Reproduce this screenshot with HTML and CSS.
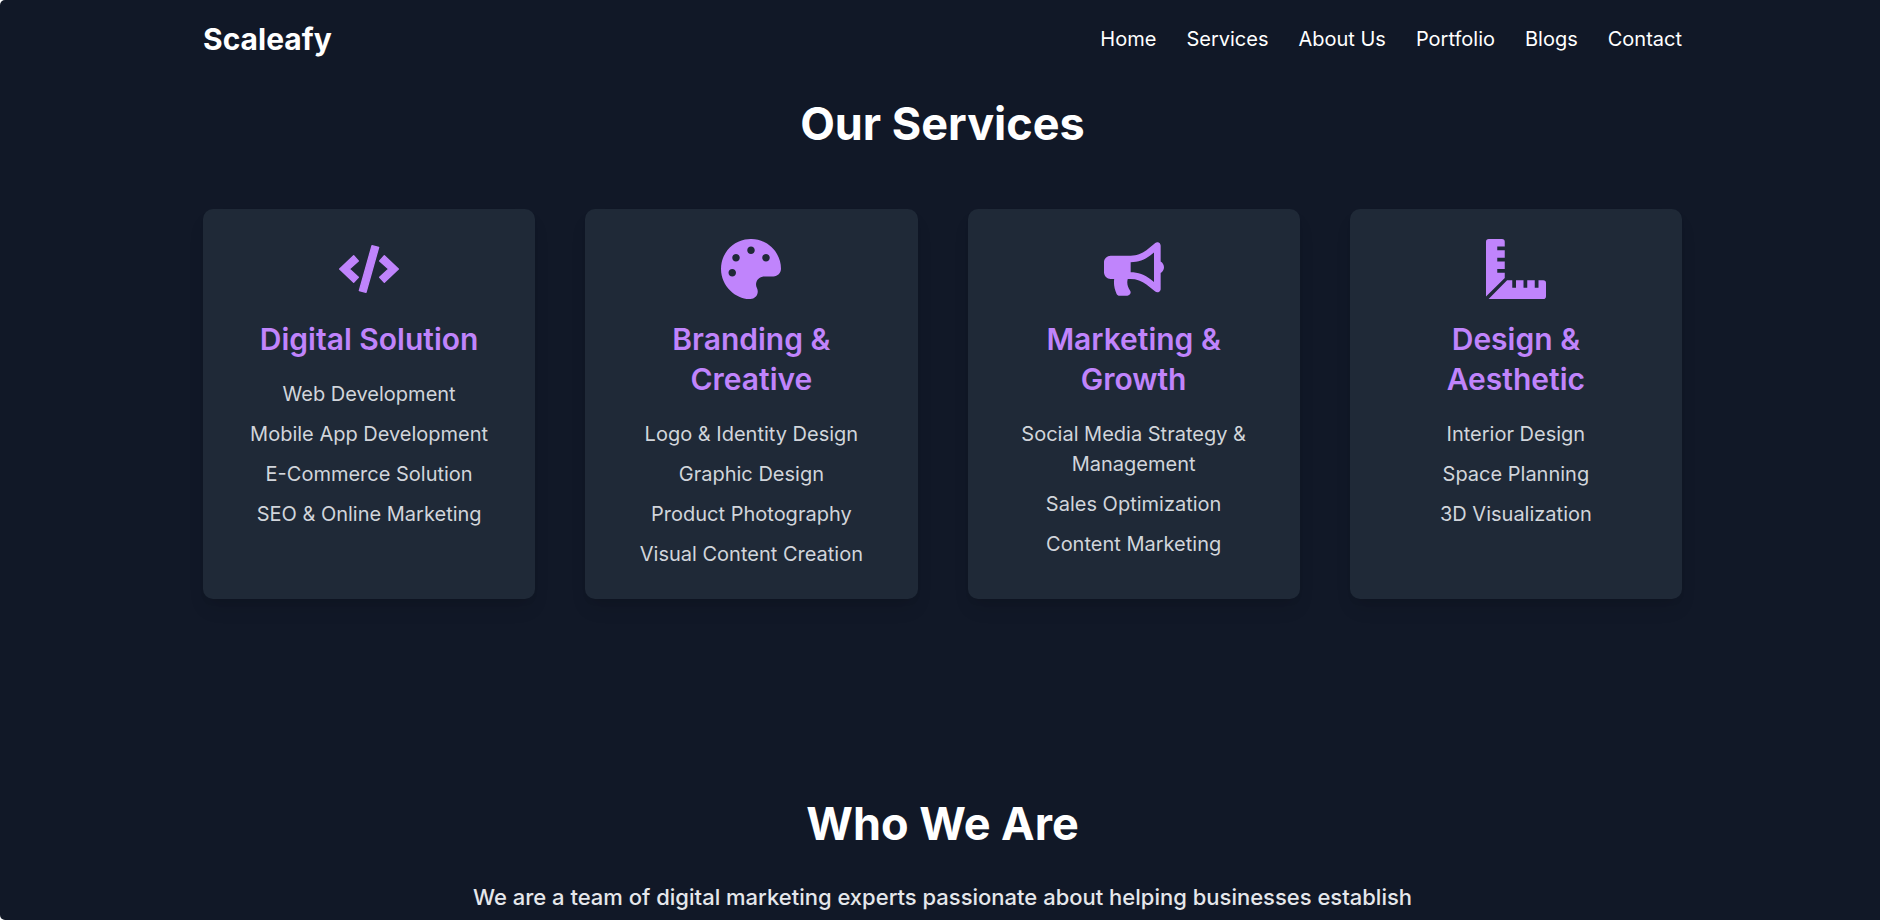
FILE: index.html
```html
<!DOCTYPE html>
<html lang="en">
<head>
  <meta charset="utf-8">
  <meta name="viewport" content="width=device-width, initial-scale=1">
  <title>Scaleafy</title>
  <link rel="stylesheet" href="styles.css">
</head>
<body>
  <div class="page">
    <header class="header">
      <div class="logo">Scaleafy</div>
      <nav class="nav">
        <a href="#home">Home</a>
        <a href="#services">Services</a>
        <a href="#about">About Us</a>
        <a href="#portfolio">Portfolio</a>
        <a href="#blogs">Blogs</a>
        <a href="#contact">Contact</a>
      </nav>
    </header>
    <main>
      <section class="services" id="services">
        <h2 class="section-title">Our Services</h2>
        <div class="cards">
          <article class="card">
            <svg class="icon" viewBox="0 0 180 180" aria-hidden="true"><path stroke="currentColor" stroke-width="4" stroke-linejoin="round" d="M2 90 44 50 58 66 31 90 58 115 44 130ZM178 90 136 50 122 66 149 90 122 115 136 130ZM99 20 119 25 81 160 61 155Z"/></svg>
            <h3 class="card-title">Digital Solution</h3>
            <ul class="list">
              <li>Web Development</li>
              <li>Mobile App Development</li>
              <li>E-Commerce Solution</li>
              <li>SEO &amp; Online Marketing</li>
            </ul>
          </article>
          <article class="card">
            <svg class="icon" viewBox="0 0 512 512" aria-hidden="true"><path d="M204.3 5C104.9 24.4 24.8 104.3 5.2 203.4c-37 187 131.7 326.4 258.8 306.7 41.2-6.4 61.4-54.6 42.5-91.7-23.1-45.4 9.9-98.4 60.9-98.4h79.7c35.8 0 64.8-29.6 64.9-65.3C511.5 97.1 368.1-26.9 204.3 5zM96 320c-17.7 0-32-14.3-32-32s14.3-32 32-32 32 14.3 32 32-14.3 32-32 32zm32-128c-17.7 0-32-14.3-32-32s14.3-32 32-32 32 14.3 32 32-14.3 32-32 32zm128-64c-17.7 0-32-14.3-32-32s14.3-32 32-32 32 14.3 32 32-14.3 32-32 32zm128 64c-17.7 0-32-14.3-32-32s14.3-32 32-32 32 14.3 32 32-14.3 32-32 32z"/></svg>
            <h3 class="card-title">Branding &amp; Creative</h3>
            <ul class="list">
              <li>Logo &amp; Identity Design</li>
              <li>Graphic Design</li>
              <li>Product Photography</li>
              <li>Visual Content Creation</li>
            </ul>
          </article>
          <article class="card">
            <svg class="icon" viewBox="0 0 576 512" aria-hidden="true"><path d="M576 240c0-23.63-12.95-44.04-32-55.12V32.01C544 23.26 537.02 0 512 0c-7.12 0-14.19 2.38-19.98 7.02l-85.03 68.03C364.28 109.19 310.66 128 256 128H64c-35.35 0-64 28.65-64 64v96c0 35.35 28.65 64 64 64h33.7c-1.39 10.48-2.18 21.14-2.18 32 0 39.77 9.26 77.35 25.56 110.94 5.19 10.69 16.52 17.06 28.4 17.06h74.28c26.05 0 41.69-29.84 25.9-50.56-16.4-21.52-26.15-48.36-26.15-77.44 0-11.11 1.62-21.79 4.41-32H256c54.66 0 108.28 18.81 150.98 52.95l85.03 68.03a32.023 32.023 0 0 0 19.98 7.02c24.92 0 32-22.78 32-32V295.13C563.05 284.04 576 263.63 576 240zm-96 141.42l-33.05-26.44C392.95 311.78 325.12 288 256 288v-96c69.12 0 136.95-23.78 190.95-66.98L480 98.58v282.84z"/></svg>
            <h3 class="card-title">Marketing &amp; Growth</h3>
            <ul class="list">
              <li>Social Media Strategy &amp; Management</li>
              <li>Sales Optimization</li>
              <li>Content Marketing</li>
            </ul>
          </article>
          <article class="card">
            <svg class="icon" viewBox="0 0 512 512" aria-hidden="true"><path d="M24 0H136a24 24 0 0 1 24 24V64H96V96H160V160H96V192H160V256H96V288H160V332L0 490V24A24 24 0 0 1 24 0ZM180 352H224V416H256V352H320V416H352V352H416V416H448V352H488a24 24 0 0 1 24 24V488a24 24 0 0 1-24 24H22Z"/></svg>
            <h3 class="card-title">Design &amp; Aesthetic</h3>
            <ul class="list">
              <li>Interior Design</li>
              <li>Space Planning</li>
              <li>3D Visualization</li>
            </ul>
          </article>
        </div>
      </section>
      <section class="about" id="about">
        <h2 class="section-title">Who We Are</h2>
        <p class="intro">We are a team of digital marketing experts passionate about helping businesses establish</p>
      </section>
    </main>
  </div>
</body>
</html>
```
FILE: styles.css
```css
* {
  box-sizing: border-box;
  margin: 0;
  padding: 0;
}

html {
  background: #fff;
}

body {
  font-family: Inter, "Liberation Sans", sans-serif;
  font-size: 20px;
  line-height: 30px;
  color: #fff;
}

.page {
  height: 100vh;
  overflow: hidden;
  padding: 0 198px 0 203px;
  background: #111827;
  border-radius: 5px 0 0 5px;
}

.header {
  display: flex;
  align-items: center;
  justify-content: space-between;
  padding: 19px 0 20px;
}

.logo {
  font-size: 30px;
  font-weight: 700;
  line-height: 40px;
}

.nav {
  display: flex;
  gap: 30px;
}

.nav a {
  color: inherit;
  text-decoration: none;
}

.services {
  padding: 20px 0 100px;
}

.section-title {
  font-size: 45px;
  font-weight: 700;
  line-height: 50px;
  text-align: center;
}

.cards {
  display: grid;
  grid-template-columns: repeat(4, 1fr);
  gap: 50px;
  margin-top: 60px;
}

.card {
  display: flex;
  flex-direction: column;
  align-items: center;
  gap: 20px;
  padding: 30px;
  text-align: center;
  background: #1f2937;
  border-radius: 10px;
  box-shadow: 0 12px 19px -4px rgba(0, 0, 0, 0.1), 0 5px 8px -5px rgba(0, 0, 0, 0.1);
}

.icon {
  width: 60px;
  height: 60px;
  color: #c084fc;
  fill: currentColor;
}

.card-title {
  font-size: 30px;
  font-weight: 600;
  line-height: 40px;
  color: #c084fc;
}

.list {
  display: grid;
  gap: 10px;
  list-style: none;
  color: #d1d5db;
}

.about {
  padding: 100px 0;
}

.intro {
  margin-top: 30px;
  font-size: 22px;
  font-weight: 500;
  line-height: 36px;
  text-align: center;
  color: #e5e7eb;
}
```
